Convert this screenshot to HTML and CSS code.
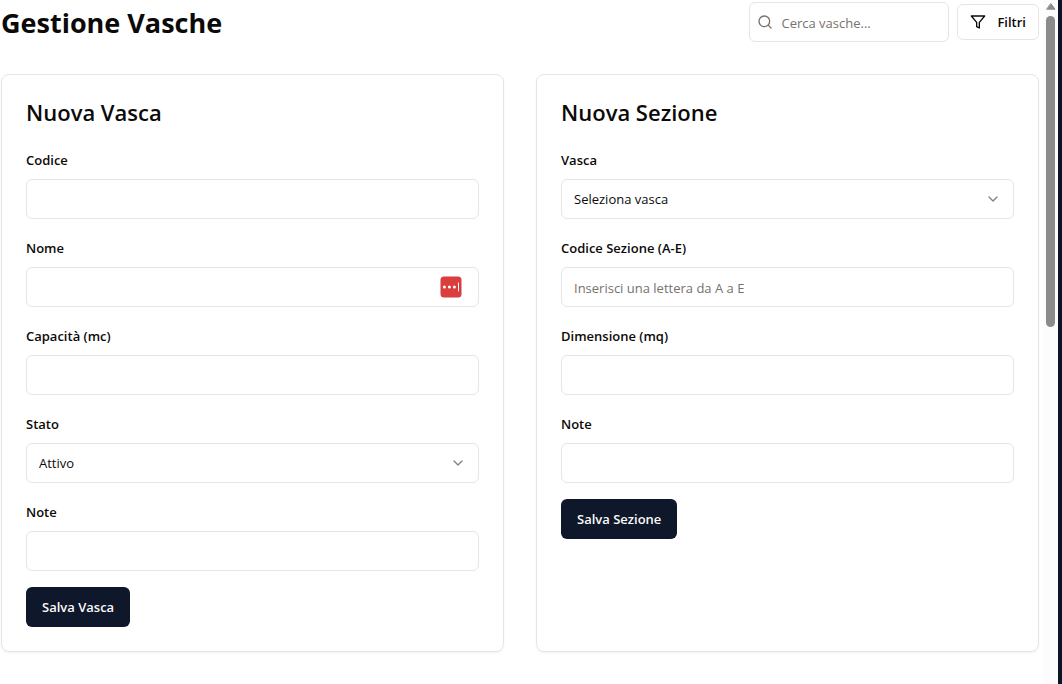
FILE: index.html
```html
<!DOCTYPE html>
<html lang="it">
<head>
<meta charset="utf-8">
<meta name="viewport" content="width=device-width, initial-scale=1">
<title>Gestione Vasche</title>
<link rel="stylesheet" href="styles.css">
</head>
<body>
<div class="shell">
  <main class="page">
    <header class="page-header">
      <h1 class="page-title">Gestione Vasche</h1>
      <div class="toolbar">
        <div class="search">
          <svg class="search-icon" viewBox="0 0 24 24" aria-hidden="true"><circle cx="11" cy="11" r="8"/><path d="m21 21-4.3-4.3"/></svg>
          <input class="input search-input" type="search" placeholder="Cerca vasche..." aria-label="Cerca vasche">
        </div>
        <button class="button button-outline" type="button">
          <svg class="filter-icon" viewBox="0 0 24 24" aria-hidden="true"><path d="M22 3H2l8 9.46V19l4 2v-8.54L22 3z"/></svg>
          Filtri
        </button>
      </div>
    </header>

    <div class="cards">
      <section class="card">
        <h2 class="card-title">Nuova Vasca</h2>
        <form class="form">
          <div class="field">
            <label class="label" for="codice">Codice</label>
            <input class="input" id="codice" type="text">
          </div>
          <div class="field">
            <label class="label" for="nome">Nome</label>
            <div class="control">
              <input class="input" id="nome" type="text">
              <svg class="autofill" viewBox="0 0 22 22" aria-hidden="true"><rect x=".5" y=".5" width="21" height="21" rx="3.5" fill="#d93d3d"/><circle cx="4.4" cy="11" r="1.5" fill="#fff"/><circle cx="9.4" cy="11" r="1.5" fill="#fff"/><circle cx="14.4" cy="11" r="1.5" fill="#fff"/><path d="M18.5 7v8" stroke="#fff"/></svg>
            </div>
          </div>
          <div class="field">
            <label class="label" for="capacita">Capacità (mc)</label>
            <input class="input" id="capacita" type="text">
          </div>
          <div class="field">
            <label class="label" for="stato">Stato</label>
            <div class="control">
              <select class="input select" id="stato"><option>Attivo</option></select>
              <svg class="chevron" viewBox="0 0 24 24" aria-hidden="true"><path d="m6 9 6 6 6-6"/></svg>
            </div>
          </div>
          <div class="field">
            <label class="label" for="note-vasca">Note</label>
            <input class="input" id="note-vasca" type="text">
          </div>
          <button class="button button-primary" type="button">Salva Vasca</button>
        </form>
      </section>

      <section class="card">
        <h2 class="card-title">Nuova Sezione</h2>
        <form class="form">
          <div class="field">
            <label class="label" for="vasca">Vasca</label>
            <div class="control">
              <select class="input select" id="vasca"><option>Seleziona vasca</option></select>
              <svg class="chevron" viewBox="0 0 24 24" aria-hidden="true"><path d="m6 9 6 6 6-6"/></svg>
            </div>
          </div>
          <div class="field">
            <label class="label" for="codice-sezione">Codice Sezione (A-E)</label>
            <input class="input" id="codice-sezione" type="text" placeholder="Inserisci una lettera da A a E">
          </div>
          <div class="field">
            <label class="label" for="dimensione">Dimensione (mq)</label>
            <input class="input" id="dimensione" type="text">
          </div>
          <div class="field">
            <label class="label" for="note-sezione">Note</label>
            <input class="input" id="note-sezione" type="text">
          </div>
          <button class="button button-primary" type="button">Salva Sezione</button>
        </form>
      </section>
    </div>
  </main>
  <div class="scrollbar" aria-hidden="true">
    <svg class="scroll-arrow" viewBox="0 0 10 7"><path d="M5 .8 9 6.2H1z" fill="#8b8b8b" stroke="#8b8b8b" stroke-linejoin="round"/></svg>
    <div class="scroll-thumb"></div>
  </div>
</div>
</body>
</html>
```
FILE: styles.css
```css
* {
  box-sizing: border-box;
}

body {
  margin: 0;
  background: #fff;
  color: #0c0a09;
  font-family: "Open Sans", "Noto Sans", sans-serif;
  font-size: 13px;
  line-height: 20px;
}

h1,
h2 {
  margin: 0;
}

svg {
  fill: none;
  stroke-linecap: round;
  stroke-linejoin: round;
}

.shell {
  display: flex;
  min-height: 100vh;
}

.page {
  flex: 1;
  min-width: 0;
  padding: 2px 4px 32px 1px;
}

.page-header {
  display: flex;
  align-items: center;
  justify-content: space-between;
  margin-bottom: 32px;
}

.page-title {
  padding-top: 2px;
  font-size: 27px;
  font-weight: 700;
  line-height: 38px;
}

.toolbar {
  display: flex;
  align-items: center;
  gap: 8px;
}

.search {
  position: relative;
  width: 200px;
}

.search-icon {
  position: absolute;
  top: 12px;
  left: 8px;
  width: 16px;
  height: 16px;
  stroke: #78716c;
  stroke-width: 2;
}

.input {
  display: block;
  width: 100%;
  height: 40px;
  padding: 0 12px;
  border: 1px solid #e5e5e5;
  border-radius: 6px;
  background: #fff;
  color: inherit;
  font: inherit;
  appearance: none;
}

input.input {
  padding-top: 2px;
}

.input::placeholder {
  color: #78716c;
  opacity: 1;
}

input.search-input {
  padding-left: 31px;
}

.button {
  display: inline-flex;
  align-items: center;
  justify-content: center;
  border: 0;
  border-radius: 6px;
  font: inherit;
  font-weight: 600;
  cursor: pointer;
}

.button-outline {
  height: 36px;
  gap: 11px;
  padding: 0 12px;
  border: 1px solid #e5e5e5;
  background: #fff;
  color: inherit;
}

.filter-icon {
  width: 16px;
  height: 16px;
  stroke: currentColor;
  stroke-width: 2;
}

.button-primary {
  align-self: flex-start;
  height: 40px;
  padding: 0 16px;
  background: #0f172a;
  color: #fafaf9;
}

.cards {
  display: grid;
  grid-template-columns: repeat(2, minmax(0, 1fr));
  gap: 32px;
}

.card {
  padding: 24px;
  border: 1px solid #e5e5e5;
  border-radius: 8px;
  box-shadow: 0 1px 2px rgba(0, 0, 0, 0.06);
}

.card-title {
  margin-bottom: 22px;
  font-size: 22px;
  font-weight: 600;
  line-height: 26px;
}

.form {
  display: flex;
  flex-direction: column;
  gap: 16px;
}

.field {
  display: flex;
  flex-direction: column;
  gap: 6px;
}

.label {
  align-self: flex-start;
  font-weight: 600;
  line-height: 26px;
}

.control {
  position: relative;
}

.chevron {
  position: absolute;
  top: 12px;
  right: 13px;
  width: 16px;
  height: 16px;
  stroke: #858382;
  stroke-width: 2;
  pointer-events: none;
}

.autofill {
  position: absolute;
  top: 9px;
  right: 17px;
  width: 22px;
  height: 22px;
}

.scrollbar {
  display: flex;
  flex-direction: column;
  align-items: center;
  gap: 6px;
  width: 19px;
  padding-top: 3px;
  border-right: 4px solid #0b1424;
  background: #fcfcfc;
}

.scroll-arrow {
  width: 10px;
  height: 7px;
}

.scroll-thumb {
  width: 9px;
  height: 311px;
  border-radius: 5px;
  background: #8b8b8b;
}
```
